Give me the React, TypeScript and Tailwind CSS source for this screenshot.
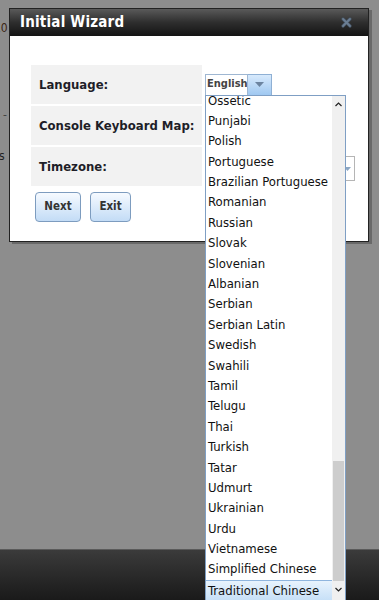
import React from "react";

const languages = [
  "Ossetic",
  "Punjabi",
  "Polish",
  "Portuguese",
  "Brazilian Portuguese",
  "Romanian",
  "Russian",
  "Slovak",
  "Slovenian",
  "Albanian",
  "Serbian",
  "Serbian Latin",
  "Swedish",
  "Swahili",
  "Tamil",
  "Telugu",
  "Thai",
  "Turkish",
  "Tatar",
  "Udmurt",
  "Ukrainian",
  "Urdu",
  "Vietnamese",
  "Simplified Chinese",
  "Traditional Chinese",
];

const font = "font-['DejaVu_Sans_Condensed','DejaVu_Sans',sans-serif]";

function CloseIcon() {
  return (
    <svg width="11" height="11" viewBox="0 0 11 11">
      <path d="M2 2 L9 9 M9 2 L2 9" stroke="#44515f" strokeWidth="3.2" strokeLinecap="round" />
      <path d="M2 2 L9 9 M9 2 L2 9" stroke="#6b7e93" strokeWidth="1.8" strokeLinecap="round" />
    </svg>
  );
}

function LanguageList() {
  return (
    <div className="absolute left-0 top-[21px] w-[141px] h-[520px] bg-white border border-[#7f9fc4] overflow-hidden z-20">
      <div className="mt-[-5px] mr-[13px]">
        {languages.map((l) => {
          const selected = l === "Traditional Chinese";
          return (
            <div
              key={l}
              className={
                "h-[20.4px] pl-[2px] text-[13px] text-[#111] whitespace-nowrap " +
                (selected
                  ? "bg-gradient-to-b from-[#e8f3fd] to-[#c7e0f7] border-t border-[#8fb5de] leading-[19.4px]"
                  : "leading-[20.4px]")
              }
            >
              {l}
            </div>
          );
        })}
      </div>
      {/* scrollbar */}
      <div className="absolute right-0 top-0 bottom-0 w-[13px] bg-[#f0f0f0] flex flex-col">
        <div className="h-[17px] flex items-center justify-center">
          <svg width="7" height="5" viewBox="0 0 7 5">
            <path d="M0.5 4 L3.5 1 L6.5 4" stroke="#222" strokeWidth="1.2" fill="none" />
          </svg>
        </div>
        <div className="h-[348px]" />
        <div className="h-[120px] mx-[1px] bg-[#cdcdcd]" />
        <div className="h-[17px] flex items-center justify-center">
          <svg width="7" height="5" viewBox="0 0 7 5">
            <path d="M0.5 1 L3.5 4 L6.5 1" stroke="#222" strokeWidth="1.2" fill="none" />
          </svg>
        </div>
      </div>
    </div>
  );
}

function Row({ label, children }: { label: string; children?: React.ReactNode }) {
  return (
    <div className="flex h-[39px]">
      <div className="w-[171px] bg-[#f2f2f2] flex items-center pl-[8px] text-[13px] font-bold text-[#1e1e28]">
        {label}
      </div>
      <div className="flex-1 flex items-center pl-[3px]">{children}</div>
    </div>
  );
}

function Button({ children, w }: { children: React.ReactNode; w: string }) {
  return (
    <button
      className={
        "h-[30px] rounded-[4px] border border-[#7d9cbf] bg-gradient-to-b from-[#f6faff] to-[#c3dcf6] text-[11.5px] font-bold text-[#333] " +
        w
      }
    >
      {children}
    </button>
  );
}

export default function App() {
  return (
    <div className={"relative w-[379px] h-[600px] bg-[#8d8d8d] overflow-hidden flex flex-col " + font}>
      {/* underlying page fragments */}
      <div className="flex-1 flex flex-col text-[12px] text-[#3a2414] ml-[-6px]">
        <div className="mt-[19px]">10</div>
        <div className="mt-[69px] ml-[9px] text-[#444]">-</div>
        <div className="mt-[23px] ml-[5px] text-[#222]">s</div>
      </div>
      <div className="h-[51px] border-t border-[#5a5a5a] bg-gradient-to-b from-[#3b3b3b] to-[#1a1a1a]" />

      {/* modal */}
      <div className="absolute left-[9px] top-[8px] w-[360px] h-[234px] border border-[#222] bg-white shadow-[3px_2px_0_rgba(0,0,0,0.25)] flex flex-col">
        <div className="h-[27px] bg-gradient-to-b from-[#5a5a5a] via-[#2e2e2e] to-[#141414] flex items-center justify-between pl-[10px] pr-[16px]">
          <span className="text-white font-bold text-[15px] tracking-[0.2px]">Initial Wizard</span>
          <CloseIcon />
        </div>
        <div className="pt-[29px] pl-[21px] flex flex-col">
          <div className="flex flex-col gap-[2px]">
            <Row label="Language:">
              <div className="relative flex">
                <div className="h-[22px] w-[43px] border border-[#9fb7d2] bg-white flex items-center pl-[1px] text-[11px] font-bold text-[#444] overflow-hidden">
                  English
                </div>
                <div className="h-[22px] w-[24px] border border-[#8fb0d4] border-l-0 bg-gradient-to-b from-[#d8eafc] to-[#9fc8f1] flex items-center justify-center">
                  <svg width="9" height="5" viewBox="0 0 9 5">
                    <path d="M0 0 L9 0 L4.5 5 Z" fill="#6c84a0" />
                  </svg>
                </div>
                <LanguageList />
              </div>
            </Row>
            <Row label="Console Keyboard Map:" />
            <Row label="Timezone:">
              <div className="ml-auto mr-[13px] mt-[4px] h-[25px] w-[150px] border border-[#b5b5b5] bg-white flex justify-end items-center pr-[3px]">
                <svg width="7" height="4" viewBox="0 0 7 4">
                  <path d="M0 0 L7 0 L3.5 4 Z" fill="#8aa6c4" />
                </svg>
              </div>
            </Row>
          </div>
          <div className="flex gap-[9px] mt-[6px] pl-[4px]">
            <Button w="w-[46px]">Next</Button>
            <Button w="w-[41px]">Exit</Button>
          </div>
        </div>
      </div>
    </div>
  );
}
